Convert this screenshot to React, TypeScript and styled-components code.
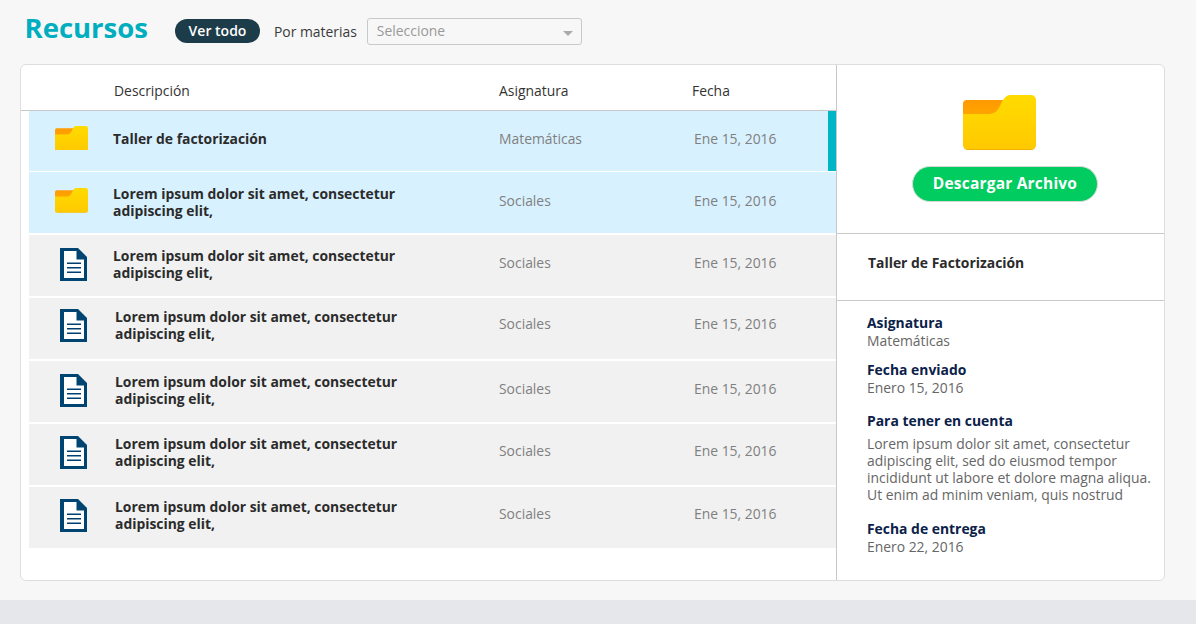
import React from 'react';
import styled, { createGlobalStyle } from 'styled-components';

const Global = createGlobalStyle`
  html, body { margin: 0; padding: 0; background: #f7f7f7; }
  body { font-family: "Open Sans", "Liberation Sans", sans-serif; color: #333; }
`;
const Page = styled.div`
  width: 1196px; height: 624px; display: flex; flex-direction: column; overflow: hidden;
`;
const Main = styled.div`
  height: 600px; box-sizing: border-box; padding: 0 31px 0 20px; display: flex; flex-direction: column;
`;
const Toolbar = styled.div`
  height: 64px; display: flex; align-items: flex-start;
`;
const Title = styled.h1`
  margin: 9px 0 0 4.5px; width: 150.5px; font-size: 27.5px; line-height: 38px; font-weight: 700; color: #00aebf;
`;
const Pill = styled.button`
  margin: 19px 14px 0 0; width: 85px; height: 24px; padding: 0; border: 0; border-radius: 12px;
  background: #1d3c49; color: #fff; font: 600 14px/24px "Open Sans", sans-serif;
`;
const FilterLabel = styled.span`
  margin: 20px 10px 0 0; font-size: 13.9px; line-height: 24px; color: #3a3a3a;
`;
const SelectBox = styled.div`
  margin-top: 18px; width: 215px; height: 27px; box-sizing: border-box; border: 1px solid #c9c9c9; border-radius: 3px;
  padding: 0 8px 2px 9px; display: flex; align-items: center; justify-content: space-between;
  font-size: 13.9px; color: #999; background: #f7f7f7;
`;
const Caret = styled.i`
  margin-top: 5px; width: 0; height: 0; border-left: 5px solid transparent; border-right: 5px solid transparent; border-top: 5px solid #aaa;
`;
const Card = styled.div`
  height: 517px; box-sizing: border-box; border: 1px solid #dedede; border-radius: 6px; background: #fff;
  display: flex; overflow: hidden;
`;
const ListPane = styled.section`
  width: 815px; flex: none; border-right: 1px solid #c9c9c9; display: flex; flex-direction: column;
`;
const HeadRow = styled.div`
  height: 45px; box-sizing: content-box; flex: none; border-bottom: 1px solid #c9c9c9; display: grid; grid-template-columns: 385px 193px 1fr;
  padding-left: 93px; align-items: center; font-size: 13.9px; color: #333;
`;
const HeadCell = styled.span`
  margin-top: 6px;
`;
const Rows = styled.div`
  padding-left: 8px; display: flex; flex-direction: column;
`;
const Row = styled.div<{ $h: number; $gap: number; $sel?: boolean; $active?: boolean }>`
  position: relative; height: ${p => p.$h}px; margin-bottom: ${p => p.$gap}px; background: ${p => (p.$sel ? '#d8f1ff' : '#f1f1f1')};
  display: flex; align-items: center;
  ${p => p.$active ? `&::after { content: ''; position: absolute; right: 0; top: 0; bottom: 0; width: 8px; background: #00b5c6; }` : ''}
`;
const IconCell = styled.div<{ $pad: number; $w: number; $up: number }>`
  width: ${p => p.$w}px; flex: none; box-sizing: border-box; padding-left: ${p => p.$pad}px; display: flex; align-items: center;
  margin-bottom: ${p => p.$up * 2}px;
`;
const RowTitle = styled.div<{ $w: number; $up: number }>`
  width: ${p => p.$w}px; flex: none; font-size: 13.9px; line-height: 17px; font-weight: 700; color: #2b2b2b;
  margin-bottom: ${p => p.$up * 2}px;
`;
const TitleText = styled.div`
  width: 300px;
`;
const Subject = styled.div<{ $up: number }>`
  width: 195px; flex: none; font-size: 13.9px; color: #808080; line-height: 20px; margin-bottom: ${p => p.$up * 2}px;
`;
const DetailPane = styled.aside`
  flex: 1; display: flex; flex-direction: column; min-width: 0;
`;
const Hero = styled.div`
  height: 169px; flex: none; box-sizing: border-box; border-bottom: 1px solid #c9c9c9; padding: 30px 0 0 75px;
  display: flex; flex-direction: column; align-items: flex-start;
`;
const HeroFolder = styled.div`
  margin-left: 51px;
`;
const Download = styled.button`
  margin-top: 16px; width: 186px; height: 36px; padding: 0 0 3px; border: 1px solid #d8d8d8; border-radius: 18px; background: #00cc5f; color: #fff;
  font: 700 15.5px/30px "Open Sans", sans-serif; letter-spacing: 0.2px;
`;
const NameBlock = styled.div`
  height: 67px; flex: none; box-sizing: border-box; border-bottom: 1px solid #c9c9c9; padding: 20px 0 0 31px;
  font-size: 13.9px; line-height: 18px; font-weight: 700; color: #2b2b2b;
`;
const Info = styled.div`
  padding: 13px 8px 0 30px; display: flex; flex-direction: column;
`;
const Label = styled.div`
  font-size: 13.9px; line-height: 18px; font-weight: 700; color: #0b2149;
`;
const Value = styled.div<{ $mb: number }>`
  font-size: 13.9px; line-height: 17px; color: #666; margin-bottom: ${p => p.$mb}px;
`;
const Note = styled.p`
  margin: 5px 0 17px; font-size: 13.9px; line-height: 17px; color: #666;
`;
const Footer = styled.div`
  height: 24px; flex: none; background: #e6e7eb;
`;
const Svg = styled.svg`
  display: block;
`;

const Folder = ({ w, id }: { w: number; id: string }) => (
  <Svg width={w} viewBox="0 0 73 55">
    <defs>
      <linearGradient id={id} x1="0" y1="0" x2="0" y2="1">
        <stop offset="0" stopColor="#ffdb00" />
        <stop offset="1" stopColor="#ffc900" />
      </linearGradient>
      <linearGradient id={`${id}o`} x1="0" y1="0" x2="0" y2="1">
        <stop offset="0" stopColor="#ff9a00" />
        <stop offset="1" stopColor="#ffa800" />
      </linearGradient>
    </defs>
    <path d="M4 5h38v20H0V9a4 4 0 0 1 4-4z" fill={`url(#${id}o)`} />
    <path d="M47 0h21a5 5 0 0 1 5 5v45a5 5 0 0 1-5 5H5a5 5 0 0 1-5-5V19h25c6 0 9-2 12-8 3-7 6-11 10-11z" fill={`url(#${id})`} />
    <path d="M0 50a5 5 0 0 0 5 5h63a5 5 0 0 0 5-5v-1a4 4 0 0 1-4 5H4a4 4 0 0 1-4-5z" fill="#f0b000" />
  </Svg>
);

const DocIcon = () => (
  <Svg width="27" height="33" viewBox="0 0 27 33">
    <path d="M0 0h18l9 9v24H0z" fill="#004571" />
    <path d="M4 3h12.5v8.5H24V30H4z" fill="#fff" />
    <path d="M7 14.5h14v1.5H7zM7 19h14v1.5H7zM7 23.5h14V25H7z" fill="#003e70" />
  </Svg>
);

const LOREM = 'Lorem ipsum dolor sit amet, consectetur adipiscing elit,';
const DATE = 'Ene 15, 2016';
type R = { kind: 'folder' | 'doc'; title: string; subject: string; h: number; gap: number; titleW: number; cell: number; icon: number; up: number; sub: number };
const rows: R[] = [
  { kind: 'folder', title: 'Taller de factorización', subject: 'Matemáticas', h: 60, gap: 1, cell: 84, titleW: 386, icon: 3, up: 3, sub: 2 },
  { kind: 'folder', title: LOREM, subject: 'Sociales', h: 61, gap: 2, cell: 84, titleW: 386, icon: 2, up: 1, sub: 2 },
  { kind: 'doc', title: LOREM, subject: 'Sociales', h: 61, gap: 2, cell: 84, titleW: 386, icon: 1, up: 2, sub: 3 },
  { kind: 'doc', title: LOREM, subject: 'Sociales', h: 61, gap: 2, cell: 86, titleW: 384, icon: 3, up: 4, sub: 5 },
  { kind: 'doc', title: LOREM, subject: 'Sociales', h: 61, gap: 2, cell: 86, titleW: 384, icon: 1, up: 2, sub: 3 },
  { kind: 'doc', title: LOREM, subject: 'Sociales', h: 61, gap: 2, cell: 86, titleW: 384, icon: 2, up: 3, sub: 4 },
  { kind: 'doc', title: LOREM, subject: 'Sociales', h: 61, gap: 0, cell: 86, titleW: 384, icon: 2, up: 3, sub: 4 },
];

export default function App() {
  return (
    <Page>
      <Global />
      <Main>
        <Toolbar>
          <Title>Recursos</Title>
          <Pill>Ver todo</Pill>
          <FilterLabel>Por materias</FilterLabel>
          <SelectBox>Seleccione<Caret /></SelectBox>
        </Toolbar>
        <Card>
          <ListPane>
            <HeadRow><HeadCell>Descripción</HeadCell><HeadCell>Asignatura</HeadCell><HeadCell>Fecha</HeadCell></HeadRow>
            <Rows>
              {rows.map((r, i) => (
                <Row key={i} $h={r.h} $gap={r.gap} $sel={r.kind === 'folder'} $active={i === 0}>
                  <IconCell $w={r.cell} $pad={r.kind === 'folder' ? 26 : 31} $up={r.icon}>
                    {r.kind === 'folder' ? <Folder w={33} id={`f${i}`} /> : <DocIcon />}
                  </IconCell>
                  <RowTitle $w={r.titleW} $up={r.up}><TitleText>{r.title}</TitleText></RowTitle>
                  <Subject $up={r.sub}>{r.subject}</Subject>
                  <Subject $up={r.sub}>{DATE}</Subject>
                </Row>
              ))}
            </Rows>
          </ListPane>
          <DetailPane>
            <Hero>
              <HeroFolder><Folder w={73} id="hero" /></HeroFolder>
              <Download>Descargar Archivo</Download>
            </Hero>
            <NameBlock>Taller de Factorización</NameBlock>
            <Info>
              <Label>Asignatura</Label>
              <Value $mb={12}>Matemáticas</Value>
              <Label>Fecha enviado</Label>
              <Value $mb={16}>Enero 15, 2016</Value>
              <Label>Para tener en cuenta</Label>
              <Note>Lorem ipsum dolor sit amet, consectetur adipiscing elit, sed do eiusmod tempor incididunt ut labore et dolore magna aliqua. Ut enim ad minim veniam, quis nostrud</Note>
              <Label>Fecha de entrega</Label>
              <Value $mb={0}>Enero 22, 2016</Value>
            </Info>
          </DetailPane>
        </Card>
      </Main>
      <Footer />
    </Page>
  );
}
